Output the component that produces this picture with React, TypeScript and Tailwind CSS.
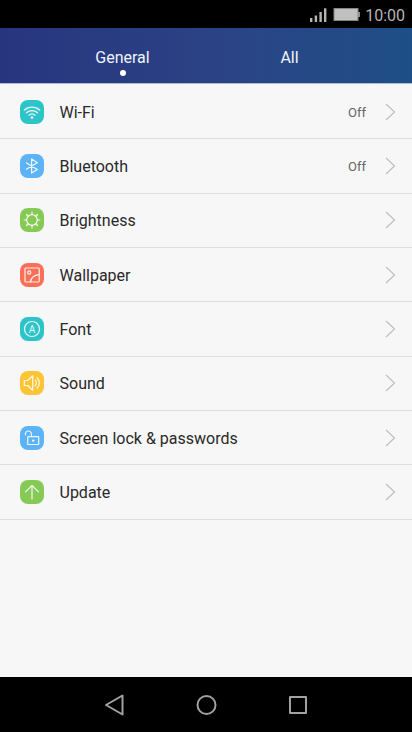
import React from 'react';

type Setting = {
  label: string;
  color: string;
  icon: React.ReactNode;
  value?: string;
};

const settings: Setting[] = [
  {
    label: 'Wi-Fi',
    color: 'bg-[#2dc4c9]',
    value: 'Off',
    icon: (
      <>
        <path d="M4.2 10.2a11.4 11.4 0 0 1 15.6 0" />
        <path d="M6.5 12.8a8 8 0 0 1 11 0" />
        <path d="M8.9 15.2a4.6 4.6 0 0 1 6.2 0" />
        <circle cx="12" cy="17.6" r="1.4" fill="currentColor" stroke="none" />
      </>
    ),
  },
  {
    label: 'Bluetooth',
    color: 'bg-[#5cb3f5]',
    value: 'Off',
    icon: <path d="M6.3 8.8l11 6.6-5.7 3.7V4.9l5.7 3.9-11 6.5" />,
  },
  {
    label: 'Brightness',
    color: 'bg-[#86ca55]',
    icon: (
      <>
        <circle cx="12" cy="12" r="5.3" />
        <path d="M12 6.4V4.2M12 17.6v2.2M6.4 12H4.2M17.6 12h2.2M8 8L6.5 6.5M16 16l1.5 1.5M16 8l1.5-1.5M8 16l-1.5 1.5" />
      </>
    ),
  },
  {
    label: 'Wallpaper',
    color: 'bg-[#fb6f57]',
    icon: (
      <>
        <rect x="5" y="5" width="14.2" height="14" rx="0.8" />
        <circle cx="9.2" cy="9.5" r="1.6" />
        <path d="M10.5 18.8c.7-4.4 3.8-6.8 8.6-7.2" />
      </>
    ),
  },
  {
    label: 'Font',
    color: 'bg-[#2dc4c9]',
    icon: (
      <>
        <circle cx="12" cy="12" r="7.5" />
        <text
          x="12"
          y="15.6"
          textAnchor="middle"
          fontSize="10"
          fill="currentColor"
          stroke="none"
        >
          A
        </text>
      </>
    ),
  },
  {
    label: 'Sound',
    color: 'bg-[#fdc535]',
    icon: (
      <>
        <path d="M4.3 9.5h3.5l4.9-4.7v14.4l-4.9-4.7H4.3z" />
        <path d="M15.2 9.2a4 4 0 0 1 0 5.6M17.2 6.8a7.4 7.4 0 0 1 0 10.4" />
      </>
    ),
  },
  {
    label: 'Screen lock & passwords',
    color: 'bg-[#5cb3f5]',
    icon: (
      <>
        <rect x="7.7" y="10.7" width="11" height="7.8" rx="0.5" />
        <path d="M11.4 10.7V8a3 3 0 0 0-6 0v.7" />
        <circle cx="13.2" cy="14.6" r="1.2" fill="currentColor" stroke="none" />
      </>
    ),
  },
  {
    label: 'Update',
    color: 'bg-[#86ca55]',
    icon: <path d="M12 18.8V5.5M5.6 11.8L12 5.4l6.4 6.4" />,
  },
];

function StatusBar() {
  return (
    <div className="h-[28px] bg-black flex items-center justify-end pr-[7px] pt-[2px] text-[#b4b4b4]">
      <svg className="w-[18px] h-[15px] mr-[6px]" viewBox="0 0 18 15" fill="currentColor">
        <rect x="1" y="10" width="2.4" height="4" />
        <rect x="5.7" y="7.5" width="2.4" height="6.5" />
        <rect x="10.4" y="4" width="2.4" height="10" />
        <rect x="15" y="0.3" width="2.4" height="13.7" />
      </svg>
      <svg className="w-[27px] h-[13px] mr-[5px] mb-[2px]" viewBox="0 0 27 13" fill="currentColor">
        <rect x="1" y="0.5" width="24" height="12" fill="#c0c0c0" stroke="#858585" />
        <rect x="25.3" y="4" width="1.5" height="5" />
      </svg>
      <span className="text-[16px] leading-none pt-[2px]">10:00</span>
    </div>
  );
}

function Tabs() {
  return (
    <div className="h-[56px] px-[39px] flex border-b border-[#aebad6] bg-linear-to-r from-[#27357f] via-[#2b4284] to-[#1e4f87] text-[#f0f3fa] text-base">
      <div className="flex-1 flex flex-col items-center pt-[18px]">
        <span className="leading-6">General</span>
        <span className="size-[6px] rounded-full bg-white" />
      </div>
      <div className="flex-1 flex flex-col items-center pt-[18px]">
        <span className="leading-6">All</span>
      </div>
    </div>
  );
}

function SettingRow({ item }: { item: Setting }) {
  return (
    <li className="h-[54.36px] pl-5 pr-4 flex items-center border-b border-[#dedede]">
      <span className={`size-6 rounded-[8px] text-white/90 ${item.color}`}>
        <svg
          className="size-6"
          viewBox="0 0 24 24"
          fill="none"
          stroke="currentColor"
          strokeWidth="1.2"
          strokeLinejoin="round"
          strokeLinecap="round"
        >
          {item.icon}
        </svg>
      </span>
      <span className="ml-[15.5px] flex-1 text-base text-[#292929] pt-[2px]">{item.label}</span>
      {item.value && <span className="text-[13px] text-[#666666] pt-[2px]">{item.value}</span>}
      <svg
        className="w-[11px] h-[18px] ml-[19px]"
        viewBox="0 0 11 18"
        fill="none"
        stroke="#bcbcbc"
        strokeWidth="1.1"
      >
        <path d="M1 1l8.6 8L1 17" />
      </svg>
    </li>
  );
}

function NavBar() {
  return (
    <div className="h-[55px] bg-black flex items-center justify-center gap-[71px]">
      <svg className="w-5 h-[22px]" viewBox="0 0 20 22" fill="none" stroke="#a2a2a2" strokeWidth="2" strokeLinejoin="round">
        <path d="M2 11L18.5 1.5v19z" />
      </svg>
      <svg className="size-[22px]" viewBox="0 0 22 22" fill="none" stroke="#a2a2a2" strokeWidth="2">
        <circle cx="11.5" cy="11" r="9" />
      </svg>
      <svg className="size-5" viewBox="0 0 20 20" fill="none" stroke="#a2a2a2" strokeWidth="2" strokeLinejoin="round">
        <rect x="2" y="2" width="16" height="16" />
      </svg>
    </div>
  );
}

export default function App() {
  return (
    <div className="w-[412px] h-[732px] flex flex-col overflow-hidden bg-[#f7f7f7] font-['Roboto',sans-serif]">
      <StatusBar />
      <Tabs />
      <ul className="flex-1 pt-[0.9px]">
        {settings.map(item => (
          <SettingRow key={item.label} item={item} />
        ))}
      </ul>
      <NavBar />
    </div>
  );
}
